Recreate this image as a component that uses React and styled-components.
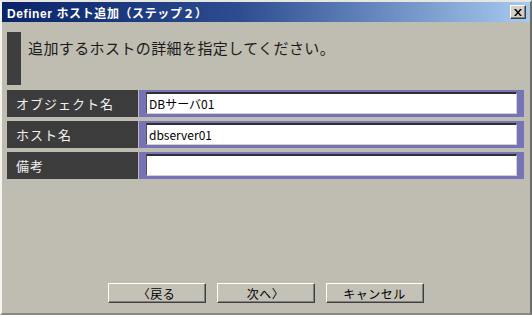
import styled, { createGlobalStyle } from "styled-components";

const GlobalStyle = createGlobalStyle`
  html, body {
    margin: 0;
    padding: 0;
    background: #ffffff;
  }
  * {
    box-sizing: border-box;
  }
`;

const fields = [
  { label: "オブジェクト名", value: "DBサーバ01" },
  { label: "ホスト名", value: "dbserver01" },
  { label: "備考", value: "" },
];

const buttons = ["〈戻る", "次へ〉", "キャンセル"];

export default function App() {
  return (
    <>
      <GlobalStyle />
      <Window>
        <TitleBar>
          <Title>Definer ホスト追加（ステップ２）</Title>
          <CloseButton>
            <svg width="8" height="7" viewBox="0 0 8 7">
              <path d="M0 0h2l2 2.5L6 0h2L5 3.5 8 7H6L4 4.5 2 7H0l3-3.5z" fill="#000" />
            </svg>
          </CloseButton>
        </TitleBar>
        <Body>
          <Header>
            <HeaderBar />
            <HeaderText>追加するホストの詳細を指定してください。</HeaderText>
          </Header>
          <Rows>
            {fields.map(f => (
              <Row key={f.label}>
                <Label>{f.label}</Label>
                <ValueCell>
                  <Input>{f.value}</Input>
                </ValueCell>
              </Row>
            ))}
          </Rows>
          <ButtonBar>
            {buttons.map(b => (
              <Button key={b}>{b}</Button>
            ))}
          </ButtonBar>
        </Body>
      </Window>
    </>
  );
}

const Window = styled.div`
  width: 532px;
  height: 315px;
  display: flex;
  flex-direction: column;
  background: #bfbcb1;
  border-style: solid;
  border-width: 2px;
  border-color: #e8e6e0 #6e6c66 #8a8880 #f4f3ef;
  font-family: "Noto Sans CJK JP", "Liberation Sans", sans-serif;
`;

const TitleBar = styled.div`
  height: 20px;
  display: flex;
  align-items: center;
  justify-content: space-between;
  padding: 0 4px 0 5px;
  background: linear-gradient(to right, #0a246a 0%, #2d4d90 45%, #a6caf0 100%);
`;

const Title = styled.div`
  color: #ffffff;
  font-family: "Liberation Sans", "Noto Sans CJK JP", sans-serif;
  font-weight: bold;
  font-size: 12px;
  letter-spacing: 0.6px;
  white-space: nowrap;
`;

const CloseButton = styled.div`
  width: 16px;
  height: 14px;
  display: flex;
  align-items: center;
  justify-content: center;
  background: #d4d0c8;
  border-style: solid;
  border-width: 1px;
  border-color: #ffffff #404040 #404040 #ffffff;
  box-shadow: inset -1px -1px 0 #808080;
`;

const Body = styled.div`
  flex: 1;
  display: flex;
  flex-direction: column;
  padding: 10px 6px 10px 5px;
`;

const Header = styled.div`
  height: 53px;
  display: flex;
  align-items: flex-start;
  gap: 7px;
`;

const HeaderBar = styled.div`
  width: 14px;
  height: 100%;
  background: #3e3e3e;
`;

const HeaderText = styled.div`
  font-size: 15px;
  line-height: 22px;
  letter-spacing: 0.4px;
  color: #1a1a1a;
  padding-top: 5px;
`;

const Rows = styled.div`
  display: flex;
  flex-direction: column;
  gap: 4px;
  margin-top: 5px;
`;

const Row = styled.div`
  height: 27px;
  display: flex;
  gap: 1px;
`;

const Label = styled.div`
  width: 131px;
  display: flex;
  align-items: center;
  padding-left: 9px;
  background: #3c3c3c;
  color: #f2f2f2;
  font-size: 13px;
  letter-spacing: 1px;
`;

const ValueCell = styled.div`
  flex: 1;
  padding: 2px 7px 3px 7px;
  background: #7674b8;
`;

const Input = styled.div`
  height: 100%;
  display: flex;
  align-items: center;
  padding-left: 2px;
  background: #ffffff;
  color: #000000;
  font-size: 12px;
  border-style: solid;
  border-width: 2px 1px 1px 1px;
  border-color: #303030 #d4d0c8 #d4d0c8 #505050;
`;

const ButtonBar = styled.div`
  margin-top: auto;
  display: flex;
  justify-content: center;
  gap: 11px;
`;

const Button = styled.div`
  width: 98px;
  height: 20px;
  display: flex;
  align-items: center;
  justify-content: center;
  background: #c4c1b7;
  color: #000000;
  font-size: 12px;
  letter-spacing: 0.5px;
  border-style: solid;
  border-width: 1px;
  border-color: #ffffff #404040 #404040 #ffffff;
  box-shadow: inset -1px -1px 0 #808080;
`;
